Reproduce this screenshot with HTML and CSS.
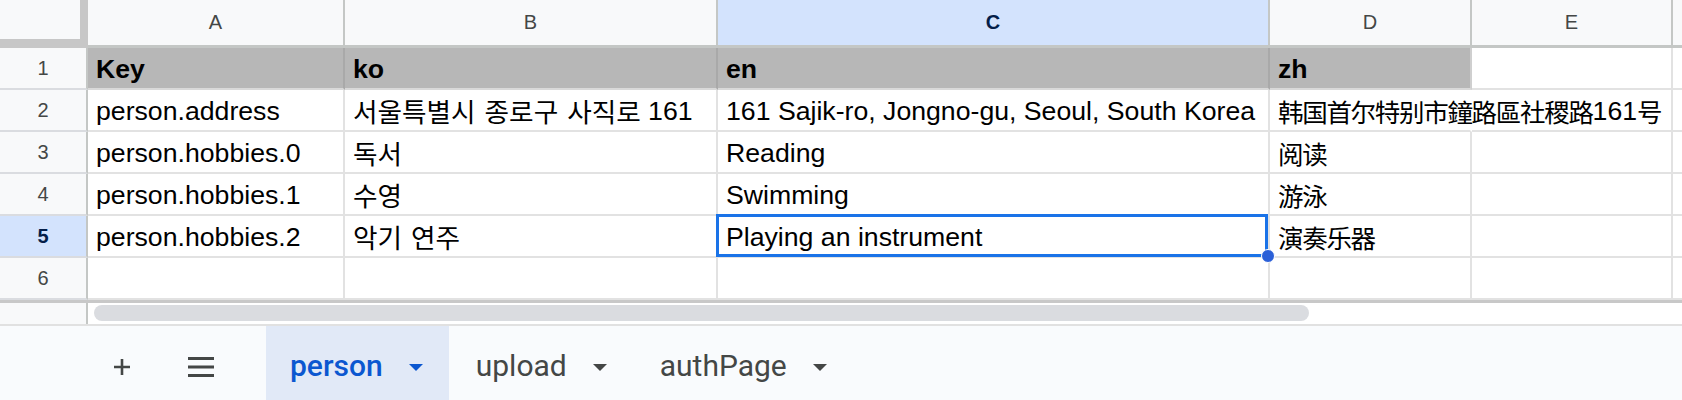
FILE: index.html
```html
<!DOCTYPE html>
<html lang="en">
<head>
<meta charset="utf-8">
<title>Sheet</title>
<link rel="stylesheet" href="styles.css">
</head>
<body>
<div class="app">
  <div class="grid">
    <div class="corner"></div>
    <div class="ch">A</div>
    <div class="ch">B</div>
    <div class="ch ch-active">C</div>
    <div class="ch">D</div>
    <div class="ch">E</div>
    <div class="ch"></div>

    <div class="rh">1</div>
    <div class="c hd">Key</div>
    <div class="c hd">ko</div>
    <div class="c hd">en</div>
    <div class="c hd hd-last">zh</div>
    <div class="c"></div>
    <div class="c"></div>

    <div class="rh">2</div>
    <div class="c">person.address</div>
    <div class="c"><span class="ko">서울특별시 종로구 사직로</span>&nbsp;161</div>
    <div class="c">161 Sajik-ro, Jongno-gu, Seoul, South Korea</div>
    <div class="c c-overflow"><span class="zh">韩国首尔特别市鐘路區社稷路</span>161<span class="zh">号</span></div>
    <div class="c c-clear"></div>
    <div class="c"></div>

    <div class="rh">3</div>
    <div class="c">person.hobbies.0</div>
    <div class="c"><span class="ko">독서</span></div>
    <div class="c">Reading</div>
    <div class="c"><span class="zh">阅读</span></div>
    <div class="c"></div>
    <div class="c"></div>

    <div class="rh">4</div>
    <div class="c">person.hobbies.1</div>
    <div class="c"><span class="ko">수영</span></div>
    <div class="c">Swimming</div>
    <div class="c"><span class="zh">游泳</span></div>
    <div class="c"></div>
    <div class="c"></div>

    <div class="rh rh-active">5</div>
    <div class="c">person.hobbies.2</div>
    <div class="c"><span class="ko">악기 연주</span></div>
    <div class="c c-selected">Playing an instrument<span class="fill-handle"></span></div>
    <div class="c"><span class="zh">演奏乐器</span></div>
    <div class="c"></div>
    <div class="c"></div>

    <div class="rh">6</div>
    <div class="c"></div>
    <div class="c"></div>
    <div class="c"></div>
    <div class="c"></div>
    <div class="c"></div>
    <div class="c"></div>
  </div>

  <div class="hscroll">
    <div class="hscroll-gutter"></div>
    <div class="hscroll-track"><div class="hscroll-thumb"></div></div>
  </div>

  <div class="tabbar">
    <div class="tb-btn tb-add">
      <svg width="20" height="20" viewBox="0 0 20 20"><path d="M10 2v16M2 10h16" stroke="#444746" stroke-width="2.6" fill="none"/></svg>
    </div>
    <div class="tb-btn tb-list">
      <svg width="28" height="22" viewBox="0 0 28 22"><path d="M1 2.5h26M1 11h26M1 19.5h26" stroke="#444746" stroke-width="2.8" fill="none"/></svg>
    </div>
    <div class="tab tab-active"><span class="tab-name">person</span><span class="tab-arrow"></span></div>
    <div class="tab"><span class="tab-name">upload</span><span class="tab-arrow"></span></div>
    <div class="tab"><span class="tab-name">authPage</span><span class="tab-arrow"></span></div>
  </div>
</div>
</body>
</html>
```

FILE: styles.css
```css
html, body {
  margin: 0;
  padding: 0;
  background: #ffffff;
}

.app {
  width: 1682px;
  height: 400px;
  overflow: hidden;
  display: flex;
  flex-direction: column;
  font-family: "Liberation Sans", Arial, sans-serif;
}

.grid {
  display: grid;
  grid-template-columns: 88px 257px 373px 552px 202px 201px 1fr;
  grid-template-rows: 48px repeat(6, 42px);
  background: #ffffff;
}

.corner {
  box-sizing: border-box;
  background: #f8f9fa;
  border-right: 8px solid #c7c7c7;
  border-bottom: 9px solid #c7c7c7;
}

.ch {
  box-sizing: border-box;
  background: #f8f9fa;
  border-right: 2px solid #c4c7c5;
  border-bottom: 3px solid #c4c7c5;
  display: flex;
  align-items: center;
  justify-content: center;
  font-size: 20px;
  color: #444746;
}

.ch-active {
  background: #d3e3fd;
  color: #041e49;
  font-weight: 700;
}

.rh {
  box-sizing: border-box;
  background: #f8f9fa;
  border-right: 2px solid #c4c7c5;
  border-bottom: 2px solid #dadce0;
  display: flex;
  align-items: center;
  justify-content: center;
  font-size: 20px;
  color: #444746;
}

.rh-active {
  background: #d3e3fd;
  color: #041e49;
  font-weight: 700;
}

.c {
  box-sizing: border-box;
  border-right: 2px solid #e2e2e2;
  border-bottom: 2px solid #e2e2e2;
  background: #ffffff;
  display: flex;
  align-items: flex-end;
  padding: 0 6px 4px 8px;
  font-size: 26.67px;
  line-height: 30px;
  color: #000000;
  white-space: nowrap;
  overflow: hidden;
}

.hd {
  background: #b7b7b7;
  font-weight: 700;
  border-right-color: #a9a9a9;
  border-bottom-color: #d9d9d9;
}

.hd-last {
  border-right-color: #cfcfcf;
}

.c-overflow {
  overflow: visible;
  border-right-color: #ffffff;
  position: relative;
  z-index: 1;
}

.c-clear {
  background: transparent;
}

.ko {
  font-family: "Noto Sans CJK KR", "Liberation Sans", sans-serif;
  font-size: 26.67px;
  word-spacing: 3px;
}

.zh {
  font-family: "Noto Sans CJK SC", "Liberation Sans", sans-serif;
  font-size: 25.5px;
  letter-spacing: -1.3px;
}

.c-selected {
  position: relative;
  overflow: visible;
}

.c-selected::after {
  content: "";
  position: absolute;
  top: -2px;
  left: -2px;
  right: 0;
  bottom: -1px;
  border: 3px solid #1a73e8;
  pointer-events: none;
}

.fill-handle {
  position: absolute;
  right: -7px;
  bottom: -7px;
  width: 12px;
  height: 12px;
  border-radius: 50%;
  background: #2b60d8;
  border: 1px solid #ffffff;
  z-index: 2;
}

.hscroll {
  box-sizing: border-box;
  height: 26px;
  border-top: 3px solid #c8c8c8;
  border-bottom: 2px solid #e1e1e1;
  display: flex;
  background: #ffffff;
}

.hscroll-gutter {
  box-sizing: border-box;
  width: 88px;
  background: #f8f9fa;
  border-right: 2px solid #c4c7c5;
}

.hscroll-track {
  flex: 1;
  padding: 2px 6px;
}

.hscroll-thumb {
  width: 1215px;
  height: 16px;
  border-radius: 8px;
  background: #dadce0;
}

.tabbar {
  flex: 1;
  display: flex;
  align-items: stretch;
  background: #f9fbfd;
  padding-left: 98px;
  font-family: Roboto, "Liberation Sans", sans-serif;
  font-size: 30px;
  color: #444746;
}

.tb-btn {
  width: 48px;
  display: flex;
  align-items: center;
  justify-content: center;
  padding-top: 8px;
}

.tb-list {
  margin-left: 31px;
  margin-right: 41px;
}

.tab {
  display: flex;
  align-items: center;
  gap: 26px;
  padding: 0 26px 0 27px;
}

.tab-active {
  background: #e1e9f7;
  color: #0b57d0;
  font-weight: 500;
  padding-left: 24px;
}

.tab-name {
  line-height: 1;
  padding-top: 6px;
}

.tab-arrow {
  width: 0;
  height: 0;
  margin-top: 8px;
  border-left: 7px solid transparent;
  border-right: 7px solid transparent;
  border-top: 7px solid currentColor;
}
```
